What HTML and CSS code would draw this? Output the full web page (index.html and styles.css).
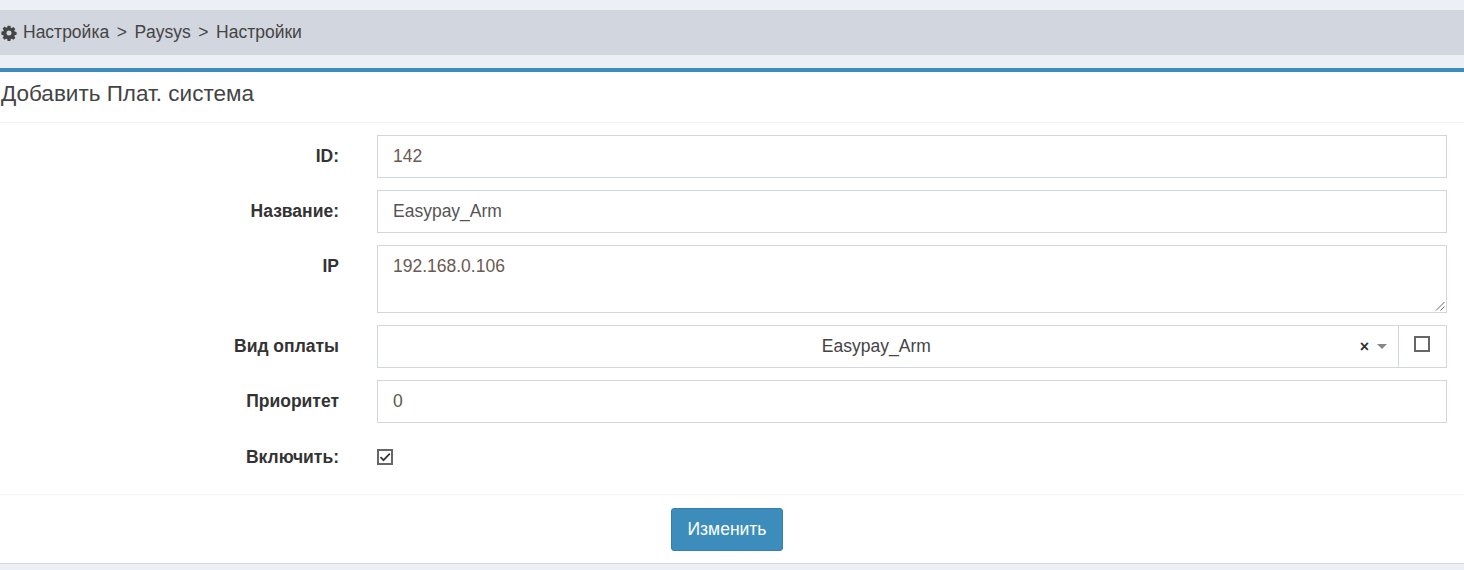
FILE: index.html
```html
<!DOCTYPE html>
<html lang="ru">
<head>
<meta charset="utf-8">
<title>Paysys</title>
<link rel="stylesheet" href="styles.css">
</head>
<body>
<nav class="crumbs">
  <svg class="gear" viewBox="0 0 16 16" aria-hidden="true"><path d="M6.6 0.8h2.8l.4 1.9 1 .4 1.6-1.1 2 2-1.1 1.6.4 1 1.9.4v2.8l-1.9.4-.4 1 1.1 1.6-2 2-1.6-1.1-1 .4-.4 1.9H6.6l-.4-1.9-1-.4-1.6 1.1-2-2 1.1-1.6-.4-1-1.9-.4V6.6l1.9-.4.4-1-1.1-1.6 2-2 1.6 1.1 1-.4zM8 5.5a2.5 2.5 0 1 0 0 5 2.5 2.5 0 0 0 0-5z" fill-rule="evenodd"/></svg>
  <span>Настройка</span><span class="sep">&gt;</span><span>Paysys</span><span class="sep">&gt;</span><span>Настройки</span>
</nav>
<main class="box">
  <h3 class="box-title">Добавить Плат. система</h3>
  <form class="box-body">
    <div class="row">
      <label class="lbl">ID:</label>
      <div class="ctl"><div class="input num">142</div></div>
    </div>
    <div class="row">
      <label class="lbl">Название:</label>
      <div class="ctl"><div class="input">Easypay_Arm</div></div>
    </div>
    <div class="row">
      <label class="lbl">IP</label>
      <div class="ctl"><div class="input area num">192.168.0.106
        <svg class="grip" viewBox="0 0 10 10" aria-hidden="true"><path d="M1 9.5L9.5 1M5.5 9.5L9.5 5.5" stroke="#666" stroke-width="1" fill="none"/></svg>
      </div></div>
    </div>
    <div class="row">
      <label class="lbl">Вид оплаты</label>
      <div class="ctl group">
        <div class="select">
          <span class="sel-text">Easypay_Arm</span>
          <span class="clear">×</span>
          <span class="caret"></span>
        </div>
        <div class="addon"><span class="chk"></span></div>
      </div>
    </div>
    <div class="row">
      <label class="lbl">Приоритет</label>
      <div class="ctl"><div class="input num2">0</div></div>
    </div>
    <div class="row row-check">
      <label class="lbl">Включить:</label>
      <div class="ctl"><span class="chk chk-small"><svg viewBox="0 0 12 12" aria-hidden="true"><path d="M1.5 6.2L4.5 9.2 10.8 2.6" stroke="#333" stroke-width="1.7" fill="none"/></svg></span></div>
    </div>
  </form>
  <div class="box-footer"><button class="btn" type="button">Изменить</button></div>
</main>
</body>
</html>
```
FILE: styles.css
```css
* { box-sizing: border-box; }
html, body { height: 100%; }
body {
  margin: 0;
  padding-top: 10px;
  background: #ecf0f5;
  font-family: "Liberation Sans", Arial, sans-serif;
  font-size: 17.5px;
  color: #333;
  overflow: hidden;
}
.crumbs {
  height: 45px;
  background: #d2d6de;
  display: flex;
  align-items: center;
  padding-left: 1px;
  color: #444;
  font-size: 17.5px;
}
.gear { width: 16px; height: 16px; fill: #444; margin-right: 6px; }
.sep { margin: 0 7.5px; }
.box {
  margin-top: 13px;
  height: 496px;
  background: #fff;
  border-top: 4px solid #3c8dbc;
  border-bottom: 1px solid #d2d6de;
}
.box-title {
  margin: 0;
  height: 51px;
  padding: 9px 1px 0;
  font-size: 22.5px;
  font-weight: 400;
  line-height: 25px;
  color: #444;
  border-bottom: 1px solid #f4f4f4;
}
.box-body {
  height: 372px;
  padding-top: 12px;
  border-bottom: 1px solid #f4f4f4;
}
.row { display: flex; margin-bottom: 12px; padding-right: 17px; }
.lbl {
  width: 339px;
  text-align: right;
  font-weight: 700;
  line-height: 20px;
  padding-top: 11px;
  flex: none;
}
.ctl { flex: 1; margin-left: 38px; }
.input {
  position: relative;
  height: 43px;
  border: 1px solid #d2d6de;
  padding: 10px 15px;
  line-height: 20px;
  color: #555;
}
.area { height: 68px; }
.num { color: #6b5a52; }
.num2 { color: #5a5a4a; }
.grip { position: absolute; right: 1px; bottom: 1px; width: 10px; height: 10px; }
.group { display: flex; }
.select {
  flex: 1;
  height: 43px;
  border: 1px solid #d2d6de;
  display: flex;
  align-items: center;
  padding-right: 11px;
  color: #444;
}
.sel-text { flex: 1; text-align: center; padding-left: 15px; }
.clear { font-weight: 700; color: #333; font-size: 16px; margin-right: 8px; }
.caret {
  width: 0;
  height: 0;
  border-left: 5px solid transparent;
  border-right: 5px solid transparent;
  border-top: 5px solid #888;
}
.addon {
  width: 48px;
  height: 43px;
  border: 1px solid #d2d6de;
  border-left: 0;
  padding: 10px 0 0 15px;
}
.chk {
  display: block;
  width: 16px;
  height: 16px;
  border: 2px solid #666;
  background: #fff;
}
.chk-small svg { display: block; width: 12px; height: 12px; }
.row-check { margin-top: 0; margin-bottom: 0; }
.row-check .lbl { padding-top: 12px; }
.row-check .ctl { padding-top: 14px; }
.box-footer { padding: 13px 10px 0 0; text-align: center; }
.btn {
  width: 112px;
  height: 43px;
  background: #3c8dbc;
  border: 1px solid #367fa9;
  border-radius: 3px;
  color: #fff;
  font: 400 17.5px "Liberation Sans", Arial, sans-serif;
  padding: 0;
}
```
